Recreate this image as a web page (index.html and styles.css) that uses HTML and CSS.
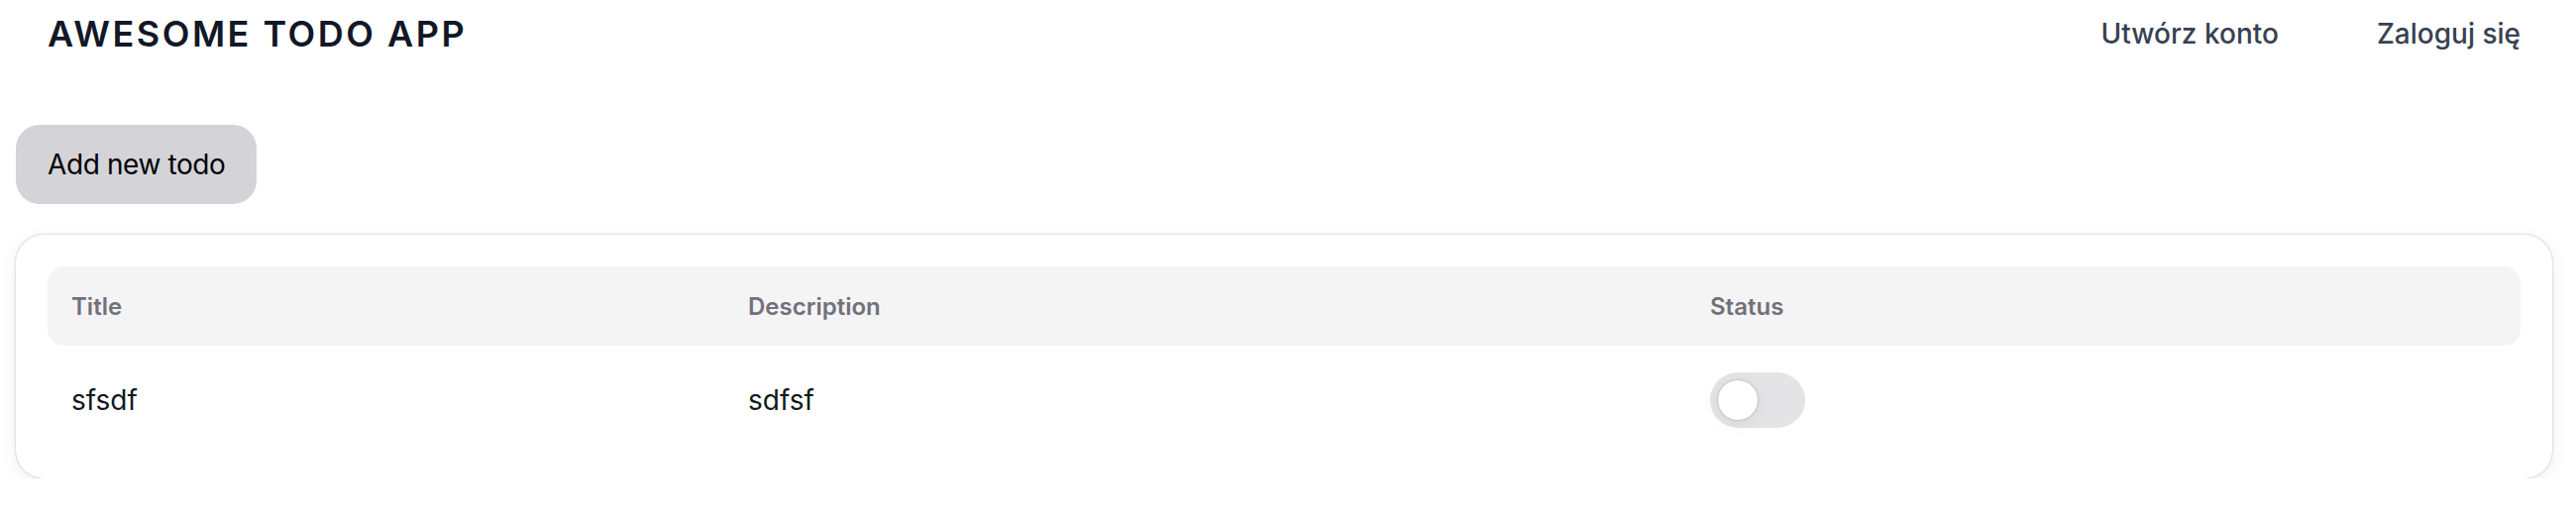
FILE: index.html
```html
<!DOCTYPE html>
<html lang="pl">
<head>
<meta charset="utf-8">
<title>Awesome Todo App</title>
<link rel="stylesheet" href="styles.css">
</head>
<body>
<header class="navbar">
  <div class="brand">AWESOME TODO APP</div>
  <nav class="nav-links">
    <a class="nav-link" href="#">Utwórz konto</a>
    <a class="nav-link" href="#">Zaloguj się</a>
  </nav>
</header>
<main class="main">
  <button class="btn-add" type="button">Add new todo</button>
  <section class="card">
    <div class="table">
      <div class="thead">
        <div class="th">Title</div>
        <div class="th">Description</div>
        <div class="th">Status</div>
      </div>
      <div class="spacer"></div>
      <div class="tr">
        <div class="td">sfsdf</div>
        <div class="td">sdfsf</div>
        <div class="td">
          <span class="switch"><span class="thumb"></span></span>
        </div>
      </div>
    </div>
  </section>
</main>
</body>
</html>
```
FILE: styles.css
```css
* { box-sizing: border-box; }
html, body { margin: 0; padding: 0; background: #ffffff; }
body {
  font-family: Inter, "Noto Sans", "DejaVu Sans", sans-serif;
  color: #11181c;
}
.navbar {
  height: 68px;
  display: flex;
  align-items: center;
  justify-content: space-between;
  padding: 0 56px 0 48px;
}
.brand {
  font-size: 36px;
  font-weight: 600;
  letter-spacing: 2.5px;
  color: #111827;
}
.nav-links {
  display: flex;
  align-items: center;
  gap: 99px;
}
.nav-link {
  font-size: 28px;
  font-weight: 500;
  color: #374151;
  text-decoration: none;
}
.main {
  padding: 0 24px 0 16px;
  display: flex;
  flex-direction: column;
  align-items: flex-start;
}
.btn-add {
  margin-top: 58px;
  height: 80px;
  padding: 0 32px;
  border: none;
  border-radius: 24px;
  background: #d4d4d8;
  color: #000000;
  font-family: Inter, "Noto Sans", sans-serif;
  font-size: 28px;
  font-weight: 400;
  letter-spacing: -0.4px;
}
.card {
  margin-top: 31px;
  align-self: stretch;
  padding: 32px;
  background: #ffffff;
  border-radius: 28px;
  box-shadow: 0 0 10px 0 rgba(0,0,0,0.02), 0 4px 20px 0 rgba(0,0,0,0.06), 0 0 2px 0 rgba(0,0,0,0.3);
}
.thead, .tr {
  display: grid;
  grid-template-columns: 683px 971px 1fr;
}
.thead {
  height: 80px;
  background: #f4f4f5;
  border-radius: 16px;
}
.th {
  display: flex;
  align-items: center;
  padding: 0 24px;
  font-size: 24px;
  font-weight: 600;
  color: #71717a;
}
.spacer { height: 8px; }
.tr { height: 94px; }
.td {
  display: flex;
  align-items: center;
  padding: 0 24px;
  font-size: 28px;
  color: #11181c;
}
.switch {
  width: 96px;
  height: 56px;
  border-radius: 9999px;
  background: #e4e4e7;
  display: flex;
  align-items: center;
  padding: 0 8px;
}
.thumb {
  width: 40px;
  height: 40px;
  border-radius: 50%;
  background: #ffffff;
  box-shadow: 0 0 10px 0 rgba(0,0,0,0.02), 0 4px 20px 0 rgba(0,0,0,0.06), 0 0 2px 0 rgba(0,0,0,0.3);
}
```
